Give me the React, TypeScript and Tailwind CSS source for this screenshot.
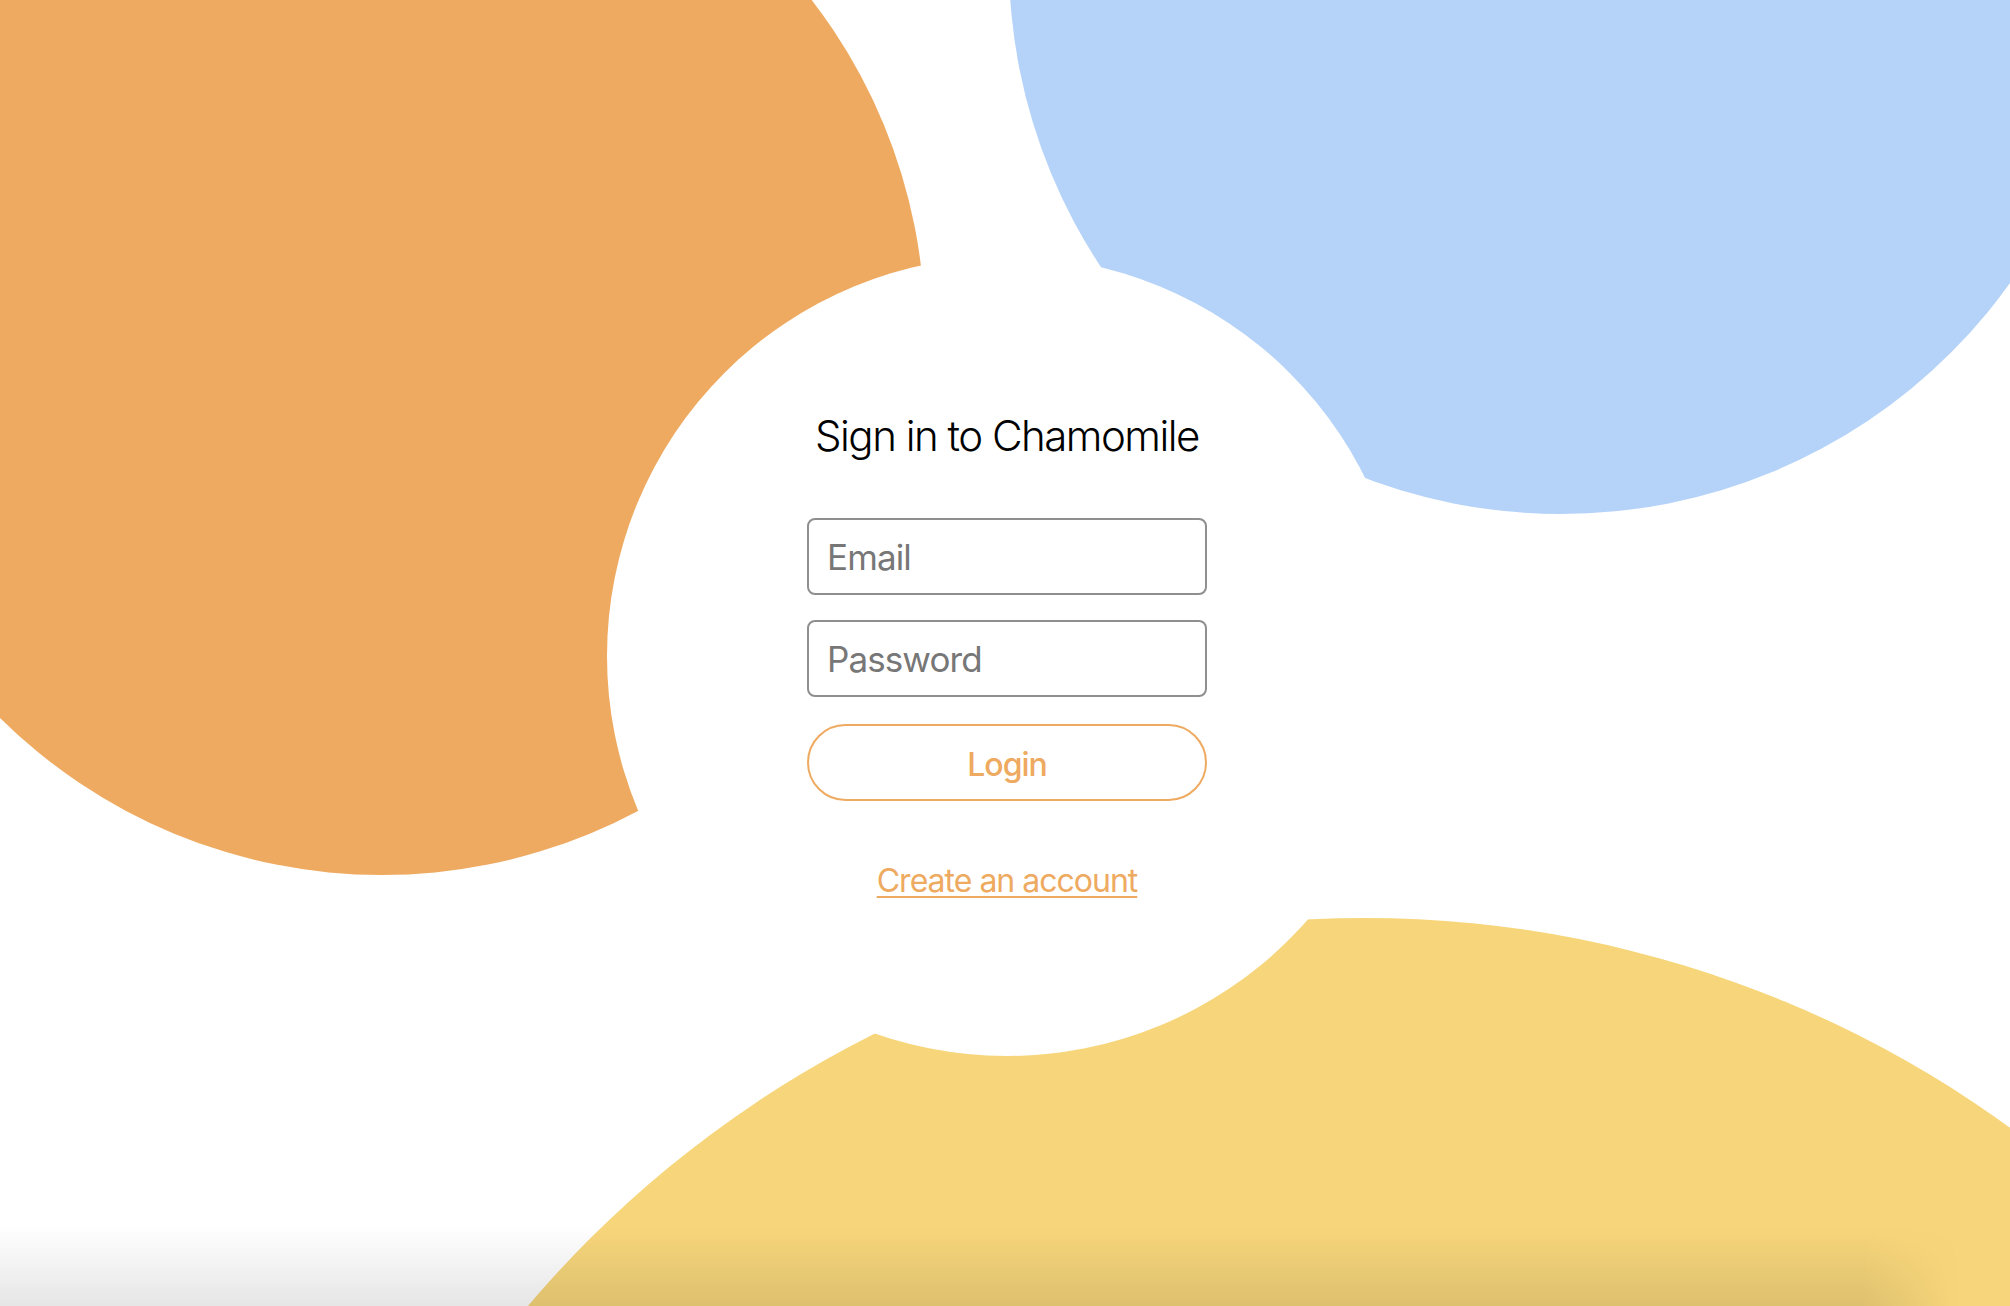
export default function App() {
  return (
    <div className="relative w-[2010px] h-[1306px] overflow-hidden bg-white font-['Inter','Liberation_Sans',sans-serif]">
      {/* background blobs */}
      <div className="absolute left-[-161px] top-[-211px] w-[1086px] h-[1086px] rounded-full bg-[#eeaa60]" />
      <div className="absolute left-[1009px] top-[-590px] w-[1104px] h-[1104px] rounded-full bg-[#b5d3f9]" />
      <div className="absolute left-[268px] top-[918px] w-[2194px] h-[2194px] rounded-full bg-[#f7d67b]" />

      {/* white disc holding the form */}
      <div className="absolute left-[607px] top-[256px] w-[800px] h-[800px] rounded-full bg-white flex flex-col items-center pt-[154px]">
        <h1 className="text-[42px] leading-[52px] font-light text-black tracking-[-1.5px]">
          Sign in to Chamomile
        </h1>

        <form className="mt-[56px] flex flex-col items-center w-[400px]" onSubmit={(e) => e.preventDefault()}>
          <input
            type="email"
            placeholder="Email"
            className="w-[400px] h-[77px] rounded-[8px] border-2 border-[#8f8f8f] px-[18px] text-[35px] tracking-[-0.9px] text-black placeholder:text-[#777777] outline-none"
          />
          <input
            type="password"
            placeholder="Password"
            className="mt-[25px] w-[400px] h-[77px] rounded-[8px] border-2 border-[#8f8f8f] px-[18px] text-[35px] tracking-[-0.9px] text-black placeholder:text-[#777777] outline-none"
          />
          <button
            type="submit"
            className="mt-[27px] w-[400px] h-[77px] rounded-full border-2 border-[#eeaa60] bg-white pt-[5px] text-[32px] font-medium tracking-[-1px] text-[#eeaa60]"
          >
            Login
          </button>
        </form>

        <a
          href="#"
          className="mt-[60px] text-[32px] leading-[40px] text-[#eeaa60] underline underline-offset-[4px] decoration-[1.5px] tracking-[-1px]"
        >
          Create an account
        </a>
      </div>

      {/* window shadow along the bottom edge */}
      <div className="pointer-events-none absolute left-0 bottom-0 w-[1960px] h-[80px] bg-gradient-to-b from-transparent to-black/10 [mask-image:linear-gradient(to_right,black_95%,transparent)]" />
    </div>
  );
}
